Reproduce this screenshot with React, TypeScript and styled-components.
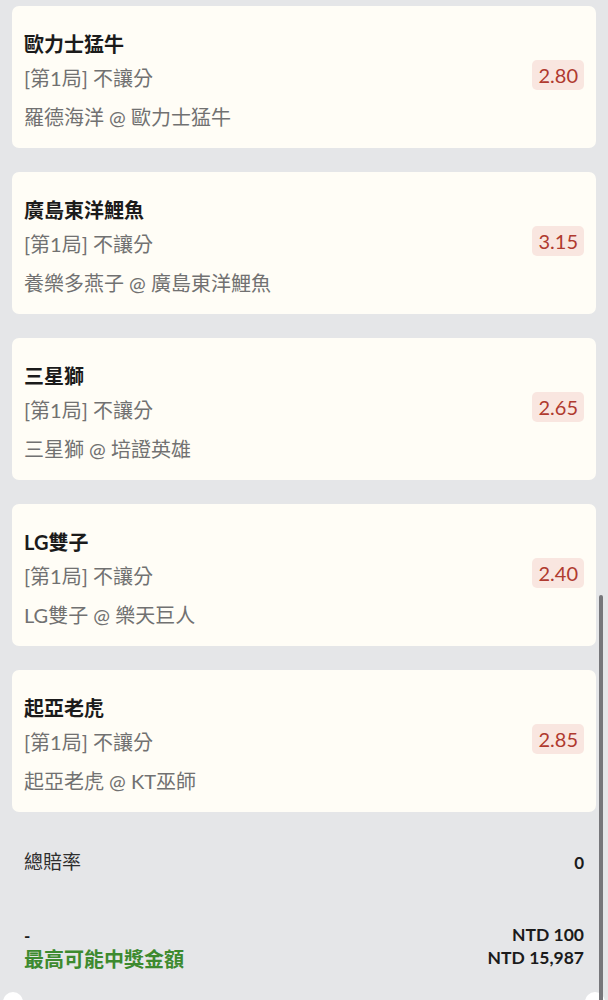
import React from "react";
import styled, { createGlobalStyle } from "styled-components";

const Global = createGlobalStyle`
  html, body { margin: 0; padding: 0; background: #e5e6e8; }
  body { font-family: Lato, "Noto Sans CJK TC", "Noto Sans", sans-serif; }
  * { box-sizing: border-box; }
`;

const Page = styled.div`
  position: relative;
  height: 1000px;
  overflow: hidden;
  background: #e5e6e8;
  padding: 6px 12px 0 12px;
`;

const List = styled.div`
  display: flex;
  flex-direction: column;
  gap: 24px;
`;

const Card = styled.div`
  height: 142px;
  background: #fffdf6;
  border-radius: 7px;
  padding: 25px 12px 18px 12px;
  display: flex;
  align-items: center;
  justify-content: space-between;
`;

const Info = styled.div`
  display: flex;
  flex-direction: column;
  align-self: flex-start;
`;

const Title = styled.div`
  font-size: 20px;
  line-height: 26px;
  font-weight: 700;
  color: #1b1b1b;
`;

const Sub = styled.div<{ $gap: number }>`
  font-size: 20px;
  line-height: 26px;
  color: #717171;
  margin-top: ${(p) => p.$gap}px;
`;

const Odds = styled.div`
  background: #f9e6e0;
  color: #b03a2f;
  font-size: 20px;
  line-height: 30px;
  padding: 0 6px;
  border-radius: 5px;
  margin-top: -11px;
`;

const Summary = styled.div`
  display: flex;
  justify-content: space-between;
  align-items: center;
  padding: 0 12px;
  margin-top: 37px;
`;

const SummaryLabel = styled.div`
  font-size: 19px;
  line-height: 26px;
  color: #2e2e2e;
`;

const SummaryValue = styled.div`
  font-size: 17px;
  font-weight: 700;
  color: #1b1b1b;
`;

const Totals = styled.div`
  display: flex;
  justify-content: space-between;
  align-items: flex-end;
  padding: 0 12px;
  margin-top: 47px;
`;

const Col = styled.div<{ $align: string; $lift: number }>`
  display: flex;
  flex-direction: column;
  align-items: ${(p) => p.$align};
  margin-bottom: ${(p) => p.$lift}px;
`;

const Dash = styled.div`
  font-size: 17px;
  line-height: 24px;
  font-weight: 700;
  color: #1b1b1b;
  transform: translateY(2px);
`;

const Prize = styled.div`
  font-size: 20px;
  line-height: 26px;
  font-weight: 700;
  color: #3d8a2f;
`;

const Amount = styled.div`
  font-size: 17.5px;
  line-height: 23px;
  font-weight: 700;
  color: #1b1b1b;
`;

const Footer = styled.div`
  display: flex;
  justify-content: space-between;
  margin: 20px -9px 0 -9px;
`;

const Dot = styled.div`
  width: 20px;
  height: 20px;
  border-radius: 50%;
  background: #ffffff;
`;

const ScrollThumb = styled.div`
  position: absolute;
  right: 5px;
  top: 595px;
  width: 4px;
  height: 420px;
  border-radius: 2px;
  background: #76767a;
`;

const bets = [
  { team: "歐力士猛牛", match: "羅德海洋 @ 歐力士猛牛", odds: "2.80" },
  { team: "廣島東洋鯉魚", match: "養樂多燕子 @ 廣島東洋鯉魚", odds: "3.15" },
  { team: "三星獅", match: "三星獅 @ 培證英雄", odds: "2.65" },
  { team: "LG雙子", match: "LG雙子 @ 樂天巨人", odds: "2.40" },
  { team: "起亞老虎", match: "起亞老虎 @ KT巫師", odds: "2.85" },
];

export default function App() {
  return (
    <>
      <Global />
      <Page>
        <List>
          {bets.map((b) => (
            <Card key={b.team}>
              <Info>
                <Title>{b.team}</Title>
                <Sub $gap={8}>[第1局] 不讓分</Sub>
                <Sub $gap={13}>{b.match}</Sub>
              </Info>
              <Odds>{b.odds}</Odds>
            </Card>
          ))}
        </List>
        <Summary>
          <SummaryLabel>總賠率</SummaryLabel>
          <SummaryValue>0</SummaryValue>
        </Summary>
        <Totals>
          <Col $align="flex-start" $lift={0}>
            <Dash>-</Dash>
            <Prize>最高可能中獎金額</Prize>
          </Col>
          <Col $align="flex-end" $lift={3}>
            <Amount>NTD 100</Amount>
            <Amount>NTD 15,987</Amount>
          </Col>
        </Totals>
        <Footer>
          <Dot />
          <Dot />
        </Footer>
        <ScrollThumb />
      </Page>
    </>
  );
}
